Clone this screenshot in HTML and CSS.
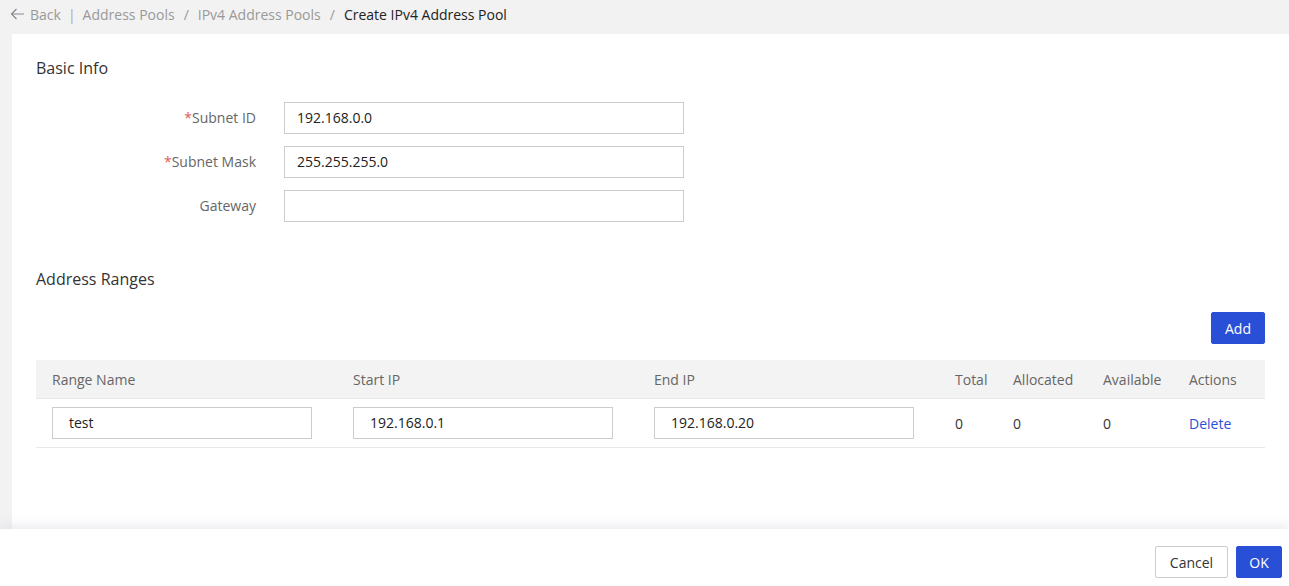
FILE: index.html
```html
<!DOCTYPE html>
<html>
<head>
<meta charset="utf-8">
<link rel="stylesheet" href="styles.css">
</head>
<body>
<div class="page">
  <div class="crumbs">
    <svg class="back-arrow" width="15" height="12" viewBox="0 0 15 12"><path d="M14 6H1.5M6.5 1L1.5 6l5 5" fill="none" stroke="#8a8a8a" stroke-width="1.2"/></svg>
    <span class="link">Back</span>
    <span class="bar">|</span>
    <span class="link">Address Pools</span>
    <span class="sep">/</span>
    <span class="link">IPv4 Address Pools</span>
    <span class="sep">/</span>
    <span class="current">Create IPv4 Address Pool</span>
  </div>
  <div class="card">
    <h2 class="section-title">Basic Info</h2>
    <div class="form">
      <div class="form-row">
        <label class="form-label"><span class="req">*</span>Subnet ID</label>
        <div class="input">192.168.0.0</div>
      </div>
      <div class="form-row">
        <label class="form-label"><span class="req">*</span>Subnet Mask</label>
        <div class="input">255.255.255.0</div>
      </div>
      <div class="form-row">
        <label class="form-label">Gateway</label>
        <div class="input"></div>
      </div>
    </div>
    <h2 class="section-title ranges-title">Address Ranges</h2>
    <div class="toolbar"><button class="btn primary">Add</button></div>
    <div class="table">
      <div class="thead">
        <div class="c c-name">Range Name</div>
        <div class="c c-start">Start IP</div>
        <div class="c c-end">End IP</div>
        <div class="c c-total">Total</div>
        <div class="c c-alloc">Allocated</div>
        <div class="c c-avail">Available</div>
        <div class="c c-act">Actions</div>
      </div>
      <div class="trow">
        <div class="c c-name"><div class="input cell-input">test</div></div>
        <div class="c c-start"><div class="input cell-input">192.168.0.1</div></div>
        <div class="c c-end"><div class="input cell-input">192.168.0.20</div></div>
        <div class="c c-total">0</div>
        <div class="c c-alloc">0</div>
        <div class="c c-avail">0</div>
        <div class="c c-act"><span class="action">Delete</span></div>
      </div>
    </div>
  </div>
  <div class="footer">
    <button class="btn">Cancel</button>
    <button class="btn primary">OK</button>
  </div>
</div>
</body>
</html>
```

FILE: styles.css
```css
* { box-sizing: border-box; }
html, body { margin: 0; padding: 0; height: 100%; }
body {
  font-family: "Open Sans", "Liberation Sans", Arial, sans-serif;
  font-size: 14px;
  color: #333;
  background: #f2f2f2;
  overflow: hidden;
}
.page {
  height: 586px;
  display: flex;
  flex-direction: column;
}
.crumbs {
  height: 34px;
  display: flex;
  align-items: center;
  padding: 0 0 6px 10px;
  font-size: 14px;
  color: #999;
}
.back-arrow { margin-right: 5px; }
.crumbs .bar { margin: 0 7px; color: #aaa; }
.crumbs .sep { margin: 0 9px; color: #999; }
.crumbs .current { color: #222; }
.card {
  flex: 1;
  margin-left: 12px;
  background: #fff;
  padding: 24px 24px 0 24px;
}
.section-title {
  margin: 0;
  font-size: 16px;
  font-weight: normal;
  color: #333;
  line-height: 20px;
}
.form {
  margin-top: 24px;
  display: flex;
  flex-direction: column;
  gap: 12px;
}
.form-row {
  display: flex;
  align-items: center;
}
.form-label {
  width: 220px;
  text-align: right;
  color: #666;
  margin-right: 28px;
  line-height: 30px;
}
.req { color: #e05a5a; }
.input {
  width: 400px;
  height: 32px;
  border: 1px solid #ccc;
  background: #fff;
  padding: 0 12px;
  line-height: 30px;
  color: #222;
}
.ranges-title { margin-top: 47px; }
.toolbar {
  display: flex;
  justify-content: flex-end;
  margin-top: 23px;
  margin-bottom: 16px;
}
.btn {
  height: 32px;
  padding: 0 14px;
  border: 1px solid #ccc;
  background: #fff;
  border-radius: 2px;
  font-family: "Open Sans", "Liberation Sans", Arial, sans-serif;
  font-size: 14px;
  color: #333;
}
.btn.primary {
  background: #2a4fd7;
  border-color: #2a4fd7;
  color: #fff;
}
.toolbar .btn { width: 54px; padding: 0; }
.table { width: 1229px; }
.thead, .trow {
  display: flex;
  align-items: center;
  border-bottom: 1px solid #e8e8e8;
}
.thead {
  height: 39px;
  background: #f3f3f3;
  color: #666;
}
.trow { height: 49px; }
.c { padding-left: 16px; flex-shrink: 0; }
.c-name, .c-start, .c-end { width: 301px; }
.c-total { width: 58px; }
.c-alloc { width: 90px; }
.c-avail { width: 86px; }
.c-act { width: 92px; }
.cell-input { width: 260px; padding-left: 16px; }
.action { color: #2a4fd7; }
.footer {
  height: 57px;
  background: #fff;
  display: flex;
  justify-content: flex-end;
  align-items: flex-start;
  gap: 8px;
  padding: 17px 7px 0 0;
  box-shadow: 0 -4px 10px rgba(200, 200, 215, 0.35);
  position: relative;
}
.footer .btn:first-child { width: 73px; padding: 0; }
.footer .btn.primary { width: 46px; padding: 0; }
```
